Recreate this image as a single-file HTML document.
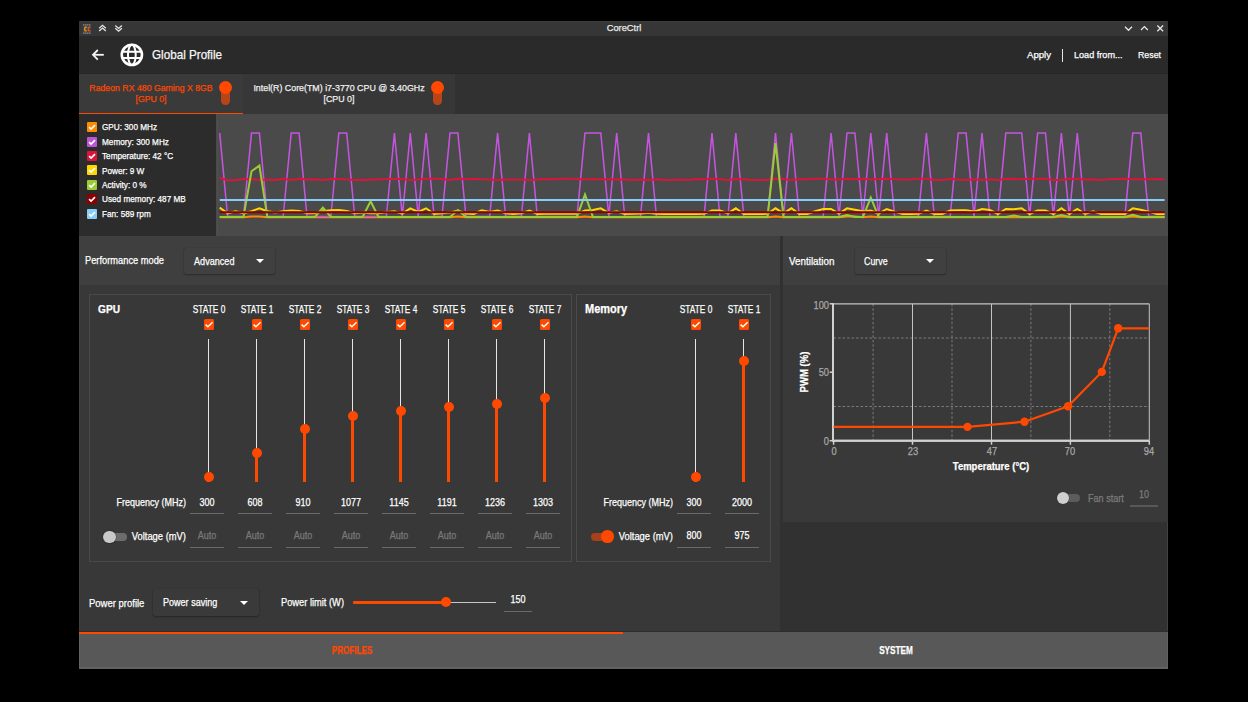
<!DOCTYPE html>
<html><head><meta charset="utf-8">
<style>
*{box-sizing:border-box;margin:0;padding:0}
html,body{width:1248px;height:702px;overflow:hidden;background:#000}
body{position:relative;font-family:"Liberation Sans",sans-serif;color:#fff}
.a{position:absolute}
.t{position:absolute;line-height:0;white-space:nowrap;color:#fff;-webkit-text-stroke:0.25px currentColor}
.cb{position:absolute;width:10.5px;height:10.8px;border-radius:1.5px;background:#ff4800}
.cb svg,.lg svg{position:absolute;left:0;top:0}
.lg{position:absolute;width:10px;height:10px;border-radius:1px}
.trk{position:absolute;width:1.6px;background:#e6e6e6}
.otrk{position:absolute;width:2.6px;background:#ff4800}
.hdl{position:absolute;width:10px;height:10px;border-radius:50%;background:#ff4800}
.ul{position:absolute;height:1px;background:#6a6a6a}
.combo{position:absolute;background:#3a3a3a;border-radius:2.5px;box-shadow:0 0 1px rgba(0,0,0,.25),0 1px 2px rgba(0,0,0,.3)}
.tri{position:absolute;width:0;height:0;border-left:4px solid transparent;border-right:4px solid transparent;border-top:4.5px solid #fff}
</style></head><body>

<div class="a" style="left:79px;top:21px;width:1089px;height:647.7px;background:#313131"></div>
<div class="a" style="left:79px;top:21px;width:1089px;height:15px;background:#363636;border-radius:3px 3px 0 0"></div>
<div class="a" style="left:81px;top:21px;width:1085px;height:1px;background:#3e3e3e"></div>
<svg class="a" style="left:79px;top:21px" width="1089" height="15" viewBox="79 21 1089 15">
<rect x="82.8" y="24" width="8.4" height="10" fill="#3d434a"/>
<g fill="#9aa0a6"><rect x="83.3" y="24.2" width="1" height="1.3"/><rect x="85.3" y="24.2" width="1" height="1.3"/><rect x="87.3" y="24.2" width="1" height="1.3"/><rect x="89.3" y="24.2" width="1" height="1.3"/>
<rect x="83.3" y="32.5" width="1" height="1.3"/><rect x="85.3" y="32.5" width="1" height="1.3"/><rect x="87.3" y="32.5" width="1" height="1.3"/><rect x="89.3" y="32.5" width="1" height="1.3"/></g>
<path d="M86.9 27.3 H85.6 Q84.7 27.3 84.7 28.2 V30 Q84.7 30.9 85.6 30.9 H86.9" fill="none" stroke="#f0900a" stroke-width="1.4"/>
<path d="M90.5 27.3 H89.2 Q88.3 27.3 88.3 28.2 V30 Q88.3 30.9 89.2 30.9 H90.5" fill="none" stroke="#e8501a" stroke-width="1.4"/>
<g fill="none" stroke="#e6e6e6" stroke-width="1.3">
<path d="M99.2 28.2 L102.5 25.3 L105.8 28.2"/><path d="M99.2 31 L102.5 28.1 L105.8 31"/>
<path d="M115.3 25.5 L118.6 28.4 L121.9 25.5"/><path d="M115.3 28.3 L118.6 31.2 L121.9 28.3"/>
<path d="M1125 26.8 L1128.5 30.3 L1132 26.8"/>
<path d="M1141 30 L1144.4 26.6 L1147.8 30"/>
<path d="M1157.3 25.5 L1163.1 31.3 M1163.1 25.5 L1157.3 31.3"/>
</g>
</svg>
<div class="t" style="left:623.6px;top:28.3px;font-size:9.58px;transform:translateX(-50%) scaleX(0.971);color:#e8e8e8">CoreCtrl</div>
<div class="a" style="left:79px;top:36px;width:1089px;height:37px;background:#2a2a2a"></div>
<svg class="a" style="left:79px;top:36px" width="200" height="37" viewBox="79 36 200 37">
<g fill="none" stroke="#f4f4f4" stroke-width="1.8">
<path d="M93 54.8 H103.8"/><path d="M97.8 50 L93 54.8 L97.8 59.6"/>
</g>
<g fill="none" stroke="#fff">
<circle cx="131.85" cy="54.85" r="10.1" stroke-width="2.6"/>
<ellipse cx="131.85" cy="54.85" rx="3.9" ry="10" stroke-width="2"/>
<path d="M121.5 51.7 H142.2 M121.5 57.9 H142.2" stroke-width="2"/>
</g>
</svg>
<div class="t" style="left:152.0px;top:55.4px;font-size:12.02px;transform-origin:0 0;transform:scaleX(0.971);color:#f6f6f6">Global Profile</div>
<div class="t" style="left:1026.7px;top:55.3px;font-size:9.79px;transform-origin:0 0;transform:scaleX(0.980)">Apply</div>
<div class="a" style="left:1062px;top:49px;width:1.4px;height:12.7px;background:#dfe8ee"></div>
<div class="t" style="left:1073.5px;top:55.3px;font-size:9.80px;transform-origin:0 0;transform:scaleX(0.929)">Load from...</div>
<div class="t" style="left:1137.6px;top:55.3px;font-size:9.80px;transform-origin:0 0;transform:scaleX(0.898)">Reset</div>
<div class="a" style="left:79px;top:73px;width:1089px;height:41px;background:#313131"></div>
<div class="a" style="left:79px;top:73px;width:1089px;height:1px;background:#272727"></div>
<div class="a" style="left:79px;top:74px;width:164px;height:40px;background:#3a3a3a"></div>
<div class="a" style="left:243px;top:74px;width:211.5px;height:40px;background:#373737"></div>
<div class="a" style="left:79px;top:112.5px;width:164px;height:1.8px;background:#ff4800"></div>
<div class="t" style="left:150.6px;top:88.0px;font-size:9.79px;transform:translateX(-50%) scaleX(0.893);color:#ff4800">Radeon RX 480 Gaming X 8GB</div>
<div class="t" style="left:150.6px;top:99.0px;font-size:9.79px;transform:translateX(-50%) scaleX(0.893);color:#ff4800">[GPU 0]</div>
<div class="a" style="left:221.4px;top:87px;width:8.5px;height:18px;background:#b8441a;border-radius:4.25px"></div>
<div class="a" style="left:219.1px;top:81.4px;width:13px;height:13px;background:#ff4800;border-radius:50%"></div>
<div class="t" style="left:338.6px;top:88.0px;font-size:9.92px;transform:translateX(-50%) scaleX(0.893);color:#f0f0f0">Intel(R) Core(TM) i7-3770 CPU @ 3.40GHz</div>
<div class="t" style="left:338.6px;top:99.0px;font-size:9.92px;transform:translateX(-50%) scaleX(0.893);color:#f0f0f0">[CPU 0]</div>
<div class="a" style="left:433px;top:87px;width:8.5px;height:18px;background:#b8441a;border-radius:4.25px"></div>
<div class="a" style="left:430.7px;top:81.4px;width:13px;height:13px;background:#ff4800;border-radius:50%"></div>
<div class="a" style="left:79px;top:114.3px;width:137px;height:121.7px;background:#2c2c2c"></div>
<div class="a" style="left:216px;top:114.3px;width:952px;height:121.7px;background:#4a4a4a"></div>
<div class="a" style="left:216.5px;top:114.3px;width:1.6px;height:121.7px;background:#4f4f4f"></div>
<div class="lg" style="left:87px;top:122.2px;background:#ff8c00"><svg width="10" height="10" viewBox="0 0 10 10"><path d="M2.1 5.1 L4.1 7.1 L8 3.1" fill="none" stroke="#fff" stroke-width="1.6"/></svg></div>
<div class="t" style="left:101.7px;top:127.4px;font-size:9.18px;transform-origin:0 0;transform:scaleX(0.893)">GPU: 300 MHz</div>
<div class="lg" style="left:87px;top:136.6px;background:#ba55d3"><svg width="10" height="10" viewBox="0 0 10 10"><path d="M2.1 5.1 L4.1 7.1 L8 3.1" fill="none" stroke="#fff" stroke-width="1.6"/></svg></div>
<div class="t" style="left:101.7px;top:141.8px;font-size:9.18px;transform-origin:0 0;transform:scaleX(0.893)">Memory: 300 MHz</div>
<div class="lg" style="left:87px;top:151.0px;background:#dc143c"><svg width="10" height="10" viewBox="0 0 10 10"><path d="M2.1 5.1 L4.1 7.1 L8 3.1" fill="none" stroke="#fff" stroke-width="1.6"/></svg></div>
<div class="t" style="left:101.7px;top:156.2px;font-size:9.18px;transform-origin:0 0;transform:scaleX(0.893)">Temperature: 42 °C</div>
<div class="lg" style="left:87px;top:165.4px;background:#ffd700"><svg width="10" height="10" viewBox="0 0 10 10"><path d="M2.1 5.1 L4.1 7.1 L8 3.1" fill="none" stroke="#fff" stroke-width="1.6"/></svg></div>
<div class="t" style="left:101.7px;top:170.6px;font-size:9.18px;transform-origin:0 0;transform:scaleX(0.893)">Power: 9 W</div>
<div class="lg" style="left:87px;top:179.8px;background:#9acd32"><svg width="10" height="10" viewBox="0 0 10 10"><path d="M2.1 5.1 L4.1 7.1 L8 3.1" fill="none" stroke="#fff" stroke-width="1.6"/></svg></div>
<div class="t" style="left:101.7px;top:185.0px;font-size:9.18px;transform-origin:0 0;transform:scaleX(0.893)">Activity: 0 %</div>
<div class="lg" style="left:87px;top:194.2px;background:#8b0000"><svg width="10" height="10" viewBox="0 0 10 10"><path d="M2.1 5.1 L4.1 7.1 L8 3.1" fill="none" stroke="#fff" stroke-width="1.6"/></svg></div>
<div class="t" style="left:101.7px;top:199.4px;font-size:9.18px;transform-origin:0 0;transform:scaleX(0.893)">Used memory: 487 MB</div>
<div class="lg" style="left:87px;top:208.6px;background:#87cefa"><svg width="10" height="10" viewBox="0 0 10 10"><path d="M2.1 5.1 L4.1 7.1 L8 3.1" fill="none" stroke="#fff" stroke-width="1.6"/></svg></div>
<div class="t" style="left:101.7px;top:213.8px;font-size:9.18px;transform-origin:0 0;transform:scaleX(0.893)">Fan: 589 rpm</div>
<svg class="a" style="left:0;top:0" width="1248" height="702" viewBox="0 0 1248 702">
<polyline points="219.7,217.2 227.6,217.2 235.6,217.2 243.5,217.2 251.5,216.6 259.4,216.6 267.3,217.2 275.3,217.2 283.2,217.2 291.2,217.2 299.1,217.2 307.0,217.2 315.0,217.2 322.9,217.2 330.9,217.2 338.8,217.2 346.7,217.2 354.7,217.2 362.6,217.2 370.6,217.2 378.5,217.2 386.4,217.2 394.4,217.2 402.3,217.2 410.3,217.2 418.2,217.2 426.1,217.2 434.1,217.2 442.0,217.2 450.0,217.2 457.9,216.6 465.9,217.2 473.8,217.2 481.7,217.2 489.7,217.2 497.6,217.2 505.6,217.2 513.5,217.2 521.4,217.2 529.4,217.2 537.3,217.2 545.3,217.2 553.2,217.2 561.1,217.2 569.1,217.2 577.0,217.2 585.0,216.6 592.9,217.2 600.8,217.2 608.8,217.2 616.7,217.2 624.7,217.2 632.6,217.2 640.5,217.2 648.5,217.2 656.4,217.2 664.4,217.2 672.3,217.2 680.2,217.2 688.2,217.2 696.1,217.2 704.1,217.2 712.0,217.2 719.9,217.2 727.9,217.2 735.8,217.2 743.8,217.2 751.7,217.2 759.6,217.2 767.6,217.2 775.5,216.6 783.5,217.2 791.4,217.2 799.3,217.2 807.3,217.2 815.2,217.2 823.2,217.2 831.1,217.2 839.0,217.2 847.0,216.6 854.9,216.6 862.9,217.2 870.8,216.6 878.7,217.2 886.7,217.2 894.6,217.2 902.6,217.2 910.5,217.2 918.4,217.2 926.4,217.2 934.3,217.2 942.3,217.2 950.2,217.2 958.2,217.2 966.1,217.2 974.0,217.2 982.0,217.2 989.9,217.2 997.9,217.2 1005.8,217.2 1013.7,217.2 1021.7,217.2 1029.6,217.2 1037.6,217.2 1045.5,217.2 1053.4,217.2 1061.4,216.6 1069.3,217.2 1077.3,217.2 1085.2,217.2 1093.1,217.2 1101.1,217.2 1109.0,217.2 1117.0,217.2 1124.9,217.2 1132.8,216.6 1140.8,217.2 1148.7,217.2 1156.7,217.2 1164.6,217.2" fill="none" stroke="#ff8c00" stroke-width="2" stroke-linejoin="miter"/>
<polyline points="219.7,133.1 227.6,216.4 235.6,216.4 243.5,216.4 251.5,133.1 259.4,133.1 267.3,216.4 275.3,216.4 283.2,216.4 291.2,133.1 299.1,133.1 307.0,216.4 315.0,216.4 322.9,216.4 330.9,216.4 338.8,133.1 346.7,133.1 354.7,216.4 362.6,216.4 370.6,216.4 378.5,216.4 386.4,216.4 394.4,133.1 402.3,216.4 410.3,133.1 418.2,216.4 426.1,133.1 434.1,216.4 442.0,216.4 450.0,133.1 457.9,133.1 465.9,216.4 473.8,216.4 481.7,216.4 489.7,216.4 497.6,133.1 505.6,216.4 513.5,216.4 521.4,216.4 529.4,133.1 537.3,216.4 545.3,216.4 553.2,216.4 561.1,216.4 569.1,216.4 577.0,216.4 585.0,133.1 592.9,133.1 600.8,133.1 608.8,216.4 616.7,133.1 624.7,216.4 632.6,216.4 640.5,216.4 648.5,133.1 656.4,216.4 664.4,216.4 672.3,216.4 680.2,216.4 688.2,216.4 696.1,216.4 704.1,216.4 712.0,133.1 719.9,216.4 727.9,216.4 735.8,133.1 743.8,216.4 751.7,216.4 759.6,216.4 767.6,216.4 775.5,133.1 783.5,216.4 791.4,133.1 799.3,216.4 807.3,216.4 815.2,216.4 823.2,216.4 831.1,133.1 839.0,216.4 847.0,133.1 854.9,133.1 862.9,216.4 870.8,133.1 878.7,216.4 886.7,133.1 894.6,216.4 902.6,216.4 910.5,216.4 918.4,216.4 926.4,133.1 934.3,216.4 942.3,216.4 950.2,216.4 958.2,133.1 966.1,133.1 974.0,216.4 982.0,133.1 989.9,216.4 997.9,216.4 1005.8,133.1 1013.7,133.1 1021.7,133.1 1029.6,216.4 1037.6,133.1 1045.5,133.1 1053.4,216.4 1061.4,133.1 1069.3,216.4 1077.3,133.1 1085.2,216.4 1093.1,216.4 1101.1,216.4 1109.0,216.4 1117.0,216.4 1124.9,216.4 1132.8,133.1 1140.8,133.1 1148.7,216.4 1156.7,216.4 1164.6,216.4" fill="none" stroke="#c555e0" stroke-width="1.5" stroke-linejoin="miter"/>
<polyline points="219.7,177.8 227.6,180.5 235.6,179.9 243.5,179.0 251.5,179.3 259.4,179.9 267.3,179.6 275.3,179.9 283.2,178.7 291.2,179.9 299.1,178.7 307.0,179.6 315.0,179.3 322.9,179.9 330.9,179.0 338.8,179.0 346.7,179.6 354.7,179.9 362.6,179.9 370.6,179.6 378.5,179.6 386.4,179.0 394.4,179.0 402.3,179.0 410.3,179.9 418.2,179.6 426.1,178.7 434.1,178.7 442.0,179.0 450.0,179.9 457.9,178.7 465.9,179.3 473.8,178.7 481.7,179.3 489.7,179.6 497.6,179.9 505.6,179.6 513.5,179.6 521.4,179.6 529.4,179.9 537.3,179.6 545.3,179.0 553.2,179.3 561.1,178.7 569.1,178.7 577.0,179.0 585.0,179.6 592.9,179.0 600.8,179.3 608.8,179.6 616.7,179.3 624.7,179.6 632.6,179.9 640.5,179.6 648.5,179.9 656.4,179.3 664.4,179.9 672.3,179.9 680.2,179.6 688.2,179.9 696.1,179.0 704.1,179.3 712.0,178.7 719.9,179.3 727.9,179.9 735.8,179.0 743.8,179.3 751.7,179.9 759.6,179.9 767.6,179.9 775.5,178.7 783.5,179.0 791.4,179.9 799.3,179.3 807.3,179.3 815.2,178.7 823.2,178.7 831.1,179.6 839.0,179.6 847.0,178.7 854.9,179.3 862.9,178.7 870.8,179.6 878.7,179.0 886.7,178.7 894.6,179.3 902.6,179.6 910.5,179.6 918.4,178.7 926.4,178.7 934.3,179.9 942.3,179.9 950.2,178.7 958.2,179.6 966.1,179.9 974.0,179.3 982.0,179.9 989.9,179.3 997.9,179.9 1005.8,179.0 1013.7,178.7 1021.7,179.3 1029.6,178.7 1037.6,178.7 1045.5,178.7 1053.4,179.9 1061.4,179.9 1069.3,178.7 1077.3,179.0 1085.2,179.6 1093.1,179.3 1101.1,179.9 1109.0,179.3 1117.0,179.0 1124.9,178.7 1132.8,179.3 1140.8,179.3 1148.7,179.3 1156.7,179.0 1164.6,179.6" fill="none" stroke="#dc143c" stroke-width="2" stroke-linejoin="miter"/>
<polyline points="219.7,207.6 227.6,213.3 235.6,211.2 243.5,213.3 251.5,211.2 259.4,208.3 267.3,211.2 275.3,212.6 283.2,211.2 291.2,210.5 299.1,210.9 307.0,213.3 315.0,213.3 322.9,211.2 330.9,210.2 338.8,210.0 346.7,210.9 354.7,213.3 362.6,212.6 370.6,213.3 378.5,213.3 386.4,212.3 394.4,211.2 402.3,213.6 410.3,208.3 418.2,211.9 426.1,208.3 434.1,214.0 442.0,213.3 450.0,212.6 457.9,210.5 465.9,213.6 473.8,214.0 481.7,210.2 489.7,211.9 497.6,210.5 505.6,213.3 513.5,214.0 521.4,213.3 529.4,210.5 537.3,214.0 545.3,213.8 553.2,213.8 561.1,213.8 569.1,213.8 577.0,213.8 585.0,210.5 592.9,210.0 600.8,208.3 608.8,213.0 616.7,211.2 624.7,214.0 632.6,213.8 640.5,213.5 648.5,212.8 656.4,213.8 664.4,214.0 672.3,214.0 680.2,214.0 688.2,214.0 696.1,214.0 704.1,213.8 712.0,210.5 719.9,210.5 727.9,213.3 735.8,208.3 743.8,214.0 751.7,214.0 759.6,214.0 767.6,213.8 775.5,208.3 783.5,213.3 791.4,208.3 799.3,214.0 807.3,214.0 815.2,211.2 823.2,209.0 831.1,209.0 839.0,213.6 847.0,208.3 854.9,209.8 862.9,211.2 870.8,210.5 878.7,213.6 886.7,209.0 894.6,211.6 902.6,214.0 910.5,214.0 918.4,213.8 926.4,210.5 934.3,214.0 942.3,214.0 950.2,210.5 958.2,210.2 966.1,210.2 974.0,211.6 982.0,209.0 989.9,210.0 997.9,214.0 1005.8,209.0 1013.7,209.3 1021.7,208.3 1029.6,214.0 1037.6,210.5 1045.5,210.5 1053.4,214.0 1061.4,208.3 1069.3,214.0 1077.3,209.0 1085.2,214.0 1093.1,211.2 1101.1,214.0 1109.0,214.0 1117.0,214.0 1124.9,214.0 1132.8,208.3 1140.8,209.8 1148.7,211.6 1156.7,214.0 1164.6,214.0" fill="none" stroke="#ffd700" stroke-width="2" stroke-linejoin="miter"/>
<polyline points="219.7,216.9 227.6,216.9 235.6,216.9 243.5,216.9 251.5,171.3 259.4,165.6 267.3,216.9 275.3,216.9 283.2,216.9 291.2,216.9 299.1,216.9 307.0,216.9 315.0,216.9 322.9,207.6 330.9,216.9 338.8,216.9 346.7,216.9 354.7,216.9 362.6,216.9 370.6,201.2 378.5,216.9 386.4,216.9 394.4,216.9 402.3,216.9 410.3,216.9 418.2,216.9 426.1,216.9 434.1,216.9 442.0,216.9 450.0,216.9 457.9,210.0 465.9,216.9 473.8,216.9 481.7,216.9 489.7,216.9 497.6,216.9 505.6,216.9 513.5,216.9 521.4,216.9 529.4,216.9 537.3,216.9 545.3,216.9 553.2,216.9 561.1,216.9 569.1,216.9 577.0,216.9 585.0,194.4 592.9,216.9 600.8,216.9 608.8,216.9 616.7,216.9 624.7,216.9 632.6,216.9 640.5,216.9 648.5,216.9 656.4,216.9 664.4,216.9 672.3,216.9 680.2,216.9 688.2,216.9 696.1,216.9 704.1,216.9 712.0,216.9 719.9,216.9 727.9,216.9 735.8,216.9 743.8,216.9 751.7,216.9 759.6,216.9 767.6,216.9 775.5,143.2 783.5,216.9 791.4,216.9 799.3,216.9 807.3,216.9 815.2,216.9 823.2,216.9 831.1,216.9 839.0,216.9 847.0,215.0 854.9,216.9 862.9,216.9 870.8,197.6 878.7,216.9 886.7,216.9 894.6,216.9 902.6,216.9 910.5,216.9 918.4,216.9 926.4,216.9 934.3,216.9 942.3,216.9 950.2,216.9 958.2,216.9 966.1,216.9 974.0,216.9 982.0,216.9 989.9,216.9 997.9,216.9 1005.8,216.9 1013.7,215.5 1021.7,216.9 1029.6,216.9 1037.6,216.9 1045.5,216.9 1053.4,216.9 1061.4,215.0 1069.3,216.9 1077.3,216.9 1085.2,216.9 1093.1,216.9 1101.1,216.9 1109.0,216.9 1117.0,216.9 1124.9,216.9 1132.8,214.7 1140.8,216.9 1148.7,216.9 1156.7,216.9 1164.6,216.9" fill="none" stroke="#9acd32" stroke-width="2" stroke-linejoin="miter"/>
<line x1="219.7" y1="212.2" x2="1164.6" y2="212.2" stroke="#8b0000" stroke-width="2"/>
<line x1="219.7" y1="200.1" x2="1164.6" y2="200.1" stroke="#87cefa" stroke-width="2"/>
</svg>
<div class="a" style="left:79px;top:236px;width:701px;height:48.5px;background:#3f3f3f"></div>
<div class="a" style="left:783px;top:236px;width:385px;height:48.5px;background:#3f3f3f"></div>
<div class="a" style="left:79px;top:284.5px;width:701px;height:346px;background:#383838"></div>
<div class="a" style="left:79px;top:236px;width:1px;height:394.5px;background:#404040"></div>
<div class="a" style="left:1167px;top:236px;width:1px;height:396px;background:#424242"></div>
<div class="a" style="left:783px;top:284.5px;width:385px;height:237px;background:#393939"></div>
<div class="t" style="left:85.4px;top:261.1px;font-size:10.42px;transform-origin:0 0;transform:scaleX(0.893)">Performance mode</div>
<div class="combo" style="left:184.3px;top:247.5px;width:90.7px;height:26.4px;background:#404040"></div>
<div class="t" style="left:193.5px;top:261.0px;font-size:11.10px;transform-origin:0 0;transform:scaleX(0.820)">Advanced</div>
<div class="tri" style="left:255.7px;top:259px"></div>
<div class="a" style="left:89px;top:294px;width:483px;height:267.5px;border:1px solid #4a4a4a"></div>
<div class="a" style="left:575.5px;top:294px;width:195.5px;height:267.5px;border:1px solid #4a4a4a"></div>
<div class="t" style="left:98.0px;top:309.2px;font-size:11.37px;transform-origin:0 0;transform:scaleX(0.893);font-weight:bold">GPU</div>
<div class="t" style="left:585.0px;top:309.2px;font-size:12.32px;transform-origin:0 0;transform:scaleX(0.893);font-weight:bold">Memory</div>
<div class="t" style="left:208.5px;top:308.7px;font-size:10.84px;transform:translateX(-50%) scaleX(0.769)">STATE 0</div>
<div class="cb" style="left:203.6px;top:318.9px"><svg width="11" height="11" viewBox="0 0 11 11"><path d="M1.6 5.6 L3.9 7.7 L8.6 3.2" fill="none" stroke="#fff" stroke-width="1.5"/></svg></div>
<div class="trk" style="left:207.7px;top:338.7px;height:138.3px"></div>
<div class="otrk" style="left:207.2px;top:477.0px;height:5.0px"></div>
<div class="hdl" style="left:203.5px;top:472.0px"></div>
<div class="t" style="left:207.2px;top:502.2px;font-size:10.53px;transform:translateX(-50%) scaleX(0.855)">300</div>
<div class="ul" style="left:190.3px;top:513px;width:33.6px"></div>
<div class="t" style="left:207.2px;top:536.2px;font-size:10.17px;transform:translateX(-50%) scaleX(0.885);color:#7a7a7a">Auto</div>
<div class="ul" style="left:190.3px;top:547px;width:33.6px"></div>
<div class="t" style="left:256.5px;top:308.7px;font-size:10.84px;transform:translateX(-50%) scaleX(0.769)">STATE 1</div>
<div class="cb" style="left:251.6px;top:318.9px"><svg width="11" height="11" viewBox="0 0 11 11"><path d="M1.6 5.6 L3.9 7.7 L8.6 3.2" fill="none" stroke="#fff" stroke-width="1.5"/></svg></div>
<div class="trk" style="left:255.7px;top:338.7px;height:114.3px"></div>
<div class="otrk" style="left:255.2px;top:453.0px;height:29.0px"></div>
<div class="hdl" style="left:251.5px;top:448.0px"></div>
<div class="t" style="left:255.2px;top:502.2px;font-size:10.53px;transform:translateX(-50%) scaleX(0.855)">608</div>
<div class="ul" style="left:238.3px;top:513px;width:33.6px"></div>
<div class="t" style="left:255.2px;top:536.2px;font-size:10.17px;transform:translateX(-50%) scaleX(0.885);color:#7a7a7a">Auto</div>
<div class="ul" style="left:238.3px;top:547px;width:33.6px"></div>
<div class="t" style="left:304.5px;top:308.7px;font-size:10.84px;transform:translateX(-50%) scaleX(0.769)">STATE 2</div>
<div class="cb" style="left:299.6px;top:318.9px"><svg width="11" height="11" viewBox="0 0 11 11"><path d="M1.6 5.6 L3.9 7.7 L8.6 3.2" fill="none" stroke="#fff" stroke-width="1.5"/></svg></div>
<div class="trk" style="left:303.7px;top:338.7px;height:90.5px"></div>
<div class="otrk" style="left:303.2px;top:429.2px;height:52.8px"></div>
<div class="hdl" style="left:299.5px;top:424.2px"></div>
<div class="t" style="left:303.2px;top:502.2px;font-size:10.53px;transform:translateX(-50%) scaleX(0.855)">910</div>
<div class="ul" style="left:286.3px;top:513px;width:33.6px"></div>
<div class="t" style="left:303.2px;top:536.2px;font-size:10.17px;transform:translateX(-50%) scaleX(0.885);color:#7a7a7a">Auto</div>
<div class="ul" style="left:286.3px;top:547px;width:33.6px"></div>
<div class="t" style="left:352.5px;top:308.7px;font-size:10.84px;transform:translateX(-50%) scaleX(0.769)">STATE 3</div>
<div class="cb" style="left:347.6px;top:318.9px"><svg width="11" height="11" viewBox="0 0 11 11"><path d="M1.6 5.6 L3.9 7.7 L8.6 3.2" fill="none" stroke="#fff" stroke-width="1.5"/></svg></div>
<div class="trk" style="left:351.7px;top:338.7px;height:77.3px"></div>
<div class="otrk" style="left:351.2px;top:416.0px;height:66.0px"></div>
<div class="hdl" style="left:347.5px;top:411.0px"></div>
<div class="t" style="left:351.2px;top:502.2px;font-size:10.53px;transform:translateX(-50%) scaleX(0.855)">1077</div>
<div class="ul" style="left:334.3px;top:513px;width:33.6px"></div>
<div class="t" style="left:351.2px;top:536.2px;font-size:10.17px;transform:translateX(-50%) scaleX(0.885);color:#7a7a7a">Auto</div>
<div class="ul" style="left:334.3px;top:547px;width:33.6px"></div>
<div class="t" style="left:400.5px;top:308.7px;font-size:10.84px;transform:translateX(-50%) scaleX(0.769)">STATE 4</div>
<div class="cb" style="left:395.6px;top:318.9px"><svg width="11" height="11" viewBox="0 0 11 11"><path d="M1.6 5.6 L3.9 7.7 L8.6 3.2" fill="none" stroke="#fff" stroke-width="1.5"/></svg></div>
<div class="trk" style="left:399.7px;top:338.7px;height:71.9px"></div>
<div class="otrk" style="left:399.2px;top:410.6px;height:71.4px"></div>
<div class="hdl" style="left:395.5px;top:405.6px"></div>
<div class="t" style="left:399.2px;top:502.2px;font-size:10.53px;transform:translateX(-50%) scaleX(0.855)">1145</div>
<div class="ul" style="left:382.3px;top:513px;width:33.6px"></div>
<div class="t" style="left:399.2px;top:536.2px;font-size:10.17px;transform:translateX(-50%) scaleX(0.885);color:#7a7a7a">Auto</div>
<div class="ul" style="left:382.3px;top:547px;width:33.6px"></div>
<div class="t" style="left:448.5px;top:308.7px;font-size:10.84px;transform:translateX(-50%) scaleX(0.769)">STATE 5</div>
<div class="cb" style="left:443.6px;top:318.9px"><svg width="11" height="11" viewBox="0 0 11 11"><path d="M1.6 5.6 L3.9 7.7 L8.6 3.2" fill="none" stroke="#fff" stroke-width="1.5"/></svg></div>
<div class="trk" style="left:447.7px;top:338.7px;height:68.3px"></div>
<div class="otrk" style="left:447.2px;top:407.0px;height:75.0px"></div>
<div class="hdl" style="left:443.5px;top:402.0px"></div>
<div class="t" style="left:447.2px;top:502.2px;font-size:10.53px;transform:translateX(-50%) scaleX(0.855)">1191</div>
<div class="ul" style="left:430.3px;top:513px;width:33.6px"></div>
<div class="t" style="left:447.2px;top:536.2px;font-size:10.17px;transform:translateX(-50%) scaleX(0.885);color:#7a7a7a">Auto</div>
<div class="ul" style="left:430.3px;top:547px;width:33.6px"></div>
<div class="t" style="left:496.5px;top:308.7px;font-size:10.84px;transform:translateX(-50%) scaleX(0.769)">STATE 6</div>
<div class="cb" style="left:491.6px;top:318.9px"><svg width="11" height="11" viewBox="0 0 11 11"><path d="M1.6 5.6 L3.9 7.7 L8.6 3.2" fill="none" stroke="#fff" stroke-width="1.5"/></svg></div>
<div class="trk" style="left:495.7px;top:338.7px;height:64.8px"></div>
<div class="otrk" style="left:495.2px;top:403.5px;height:78.5px"></div>
<div class="hdl" style="left:491.5px;top:398.5px"></div>
<div class="t" style="left:495.2px;top:502.2px;font-size:10.53px;transform:translateX(-50%) scaleX(0.855)">1236</div>
<div class="ul" style="left:478.3px;top:513px;width:33.6px"></div>
<div class="t" style="left:495.2px;top:536.2px;font-size:10.17px;transform:translateX(-50%) scaleX(0.885);color:#7a7a7a">Auto</div>
<div class="ul" style="left:478.3px;top:547px;width:33.6px"></div>
<div class="t" style="left:544.5px;top:308.7px;font-size:10.84px;transform:translateX(-50%) scaleX(0.769)">STATE 7</div>
<div class="cb" style="left:539.6px;top:318.9px"><svg width="11" height="11" viewBox="0 0 11 11"><path d="M1.6 5.6 L3.9 7.7 L8.6 3.2" fill="none" stroke="#fff" stroke-width="1.5"/></svg></div>
<div class="trk" style="left:543.7px;top:338.7px;height:59.7px"></div>
<div class="otrk" style="left:543.2px;top:398.4px;height:83.6px"></div>
<div class="hdl" style="left:539.5px;top:393.4px"></div>
<div class="t" style="left:543.2px;top:502.2px;font-size:10.53px;transform:translateX(-50%) scaleX(0.855)">1303</div>
<div class="ul" style="left:526.3px;top:513px;width:33.6px"></div>
<div class="t" style="left:543.2px;top:536.2px;font-size:10.17px;transform:translateX(-50%) scaleX(0.885);color:#7a7a7a">Auto</div>
<div class="ul" style="left:526.3px;top:547px;width:33.6px"></div>
<div class="t" style="left:695.5px;top:308.7px;font-size:10.84px;transform:translateX(-50%) scaleX(0.769)">STATE 0</div>
<div class="cb" style="left:690.6px;top:318.9px"><svg width="11" height="11" viewBox="0 0 11 11"><path d="M1.6 5.6 L3.9 7.7 L8.6 3.2" fill="none" stroke="#fff" stroke-width="1.5"/></svg></div>
<div class="trk" style="left:694.7px;top:338.7px;height:138.3px"></div>
<div class="otrk" style="left:694.2px;top:477.0px;height:5.0px"></div>
<div class="hdl" style="left:690.5px;top:472.0px"></div>
<div class="t" style="left:694.2px;top:502.2px;font-size:10.53px;transform:translateX(-50%) scaleX(0.855)">300</div>
<div class="ul" style="left:677.3px;top:513px;width:33.6px"></div>
<div class="t" style="left:694.2px;top:536.2px;font-size:10.17px;transform:translateX(-50%) scaleX(0.885);color:#fff">800</div>
<div class="ul" style="left:677.3px;top:547px;width:33.6px"></div>
<div class="t" style="left:743.5px;top:308.7px;font-size:10.84px;transform:translateX(-50%) scaleX(0.769)">STATE 1</div>
<div class="cb" style="left:738.6px;top:318.9px"><svg width="11" height="11" viewBox="0 0 11 11"><path d="M1.6 5.6 L3.9 7.7 L8.6 3.2" fill="none" stroke="#fff" stroke-width="1.5"/></svg></div>
<div class="trk" style="left:742.7px;top:338.7px;height:22.3px"></div>
<div class="otrk" style="left:742.2px;top:361.0px;height:121.0px"></div>
<div class="hdl" style="left:738.5px;top:356.0px"></div>
<div class="t" style="left:742.2px;top:502.2px;font-size:10.53px;transform:translateX(-50%) scaleX(0.855)">2000</div>
<div class="ul" style="left:725.3px;top:513px;width:33.6px"></div>
<div class="t" style="left:742.2px;top:536.2px;font-size:10.17px;transform:translateX(-50%) scaleX(0.885);color:#fff">975</div>
<div class="ul" style="left:725.3px;top:547px;width:33.6px"></div>
<div class="t" style="left:186.0px;top:503.2px;font-size:10.35px;transform-origin:100% 0;transform:translateX(-100%) scaleX(0.870)">Frequency (MHz)</div>
<div class="t" style="left:186.0px;top:536.4px;font-size:10.62px;transform-origin:100% 0;transform:translateX(-100%) scaleX(0.885)">Voltage (mV)</div>
<div class="t" style="left:673.2px;top:503.2px;font-size:10.35px;transform-origin:100% 0;transform:translateX(-100%) scaleX(0.870)">Frequency (MHz)</div>
<div class="t" style="left:673.2px;top:536.4px;font-size:10.62px;transform-origin:100% 0;transform:translateX(-100%) scaleX(0.885)">Voltage (mV)</div>
<div class="a" style="left:106px;top:532.8px;width:21px;height:8.4px;background:#6c6c6c;border-radius:4.2px"></div>
<div class="a" style="left:103.4px;top:530.5px;width:12.7px;height:12.7px;background:#c8c8c8;border-radius:50%;box-shadow:0 0 1.5px rgba(0,0,0,.6)"></div>
<div class="a" style="left:591px;top:532.6px;width:21px;height:8.4px;background:#a8401c;border-radius:4.2px"></div>
<div class="a" style="left:601.3px;top:530.2px;width:12.7px;height:12.7px;background:#ff4800;border-radius:50%"></div>
<div class="t" style="left:88.6px;top:602.6px;font-size:10.64px;transform-origin:0 0;transform:scaleX(0.893)">Power profile</div>
<div class="combo" style="left:153px;top:589px;width:105.7px;height:27px"></div>
<div class="t" style="left:162.5px;top:603.1px;font-size:10.14px;transform-origin:0 0;transform:scaleX(0.893)">Power saving</div>
<div class="tri" style="left:239.7px;top:600.5px"></div>
<div class="t" style="left:280.5px;top:603.2px;font-size:10.42px;transform-origin:0 0;transform:scaleX(0.893)">Power limit (W)</div>
<div class="a" style="left:352.5px;top:601.2px;width:94px;height:2.6px;background:#ff4800;border-radius:1px"></div>
<div class="a" style="left:446px;top:601.5px;width:50px;height:1.8px;background:#c8c8c8"></div>
<div class="hdl" style="left:441.2px;top:597px"></div>
<div class="t" style="left:518.2px;top:600.3px;font-size:10.35px;transform:translateX(-50%) scaleX(0.870)">150</div>
<div class="ul" style="left:504.3px;top:611px;width:27.8px"></div>
<div class="t" style="left:789.4px;top:260.8px;font-size:11.03px;transform-origin:0 0;transform:scaleX(0.893)">Ventilation</div>
<div class="combo" style="left:855.3px;top:247.5px;width:90.3px;height:26.4px;background:#404040"></div>
<div class="t" style="left:864.1px;top:261.0px;font-size:11.57px;transform-origin:0 0;transform:scaleX(0.769)">Curve</div>
<div class="tri" style="left:926.2px;top:259px"></div>
<svg class="a" style="left:783px;top:285px" width="385" height="236" viewBox="783 285 385 236">
<line x1="873.1" y1="303.8" x2="873.1" y2="440.7" stroke="#7c7c7c" stroke-width="1" stroke-dasharray="2.5 2"/>
<line x1="952.0" y1="303.8" x2="952.0" y2="440.7" stroke="#7c7c7c" stroke-width="1" stroke-dasharray="2.5 2"/>
<line x1="1030.9" y1="303.8" x2="1030.9" y2="440.7" stroke="#7c7c7c" stroke-width="1" stroke-dasharray="2.5 2"/>
<line x1="1109.8" y1="303.8" x2="1109.8" y2="440.7" stroke="#7c7c7c" stroke-width="1" stroke-dasharray="2.5 2"/>
<line x1="833.6" y1="338.0" x2="1149.3" y2="338.0" stroke="#7c7c7c" stroke-width="1" stroke-dasharray="2.5 2"/>
<line x1="833.6" y1="406.5" x2="1149.3" y2="406.5" stroke="#7c7c7c" stroke-width="1" stroke-dasharray="2.5 2"/>
<line x1="912.5" y1="303.8" x2="912.5" y2="440.7" stroke="#c4c4c4" stroke-width="1"/>
<line x1="991.5" y1="303.8" x2="991.5" y2="440.7" stroke="#c4c4c4" stroke-width="1"/>
<line x1="1070.4" y1="303.8" x2="1070.4" y2="440.7" stroke="#c4c4c4" stroke-width="1"/>
<line x1="1149.3" y1="303.8" x2="1149.3" y2="440.7" stroke="#c4c4c4" stroke-width="1"/>
<line x1="833.6" y1="303.8" x2="1149.3" y2="303.8" stroke="#c4c4c4" stroke-width="1.2"/>
<line x1="833.6" y1="440.7" x2="1149.3" y2="440.7" stroke="#c4c4c4" stroke-width="2"/>
<line x1="833.0" y1="303.3" x2="833.0" y2="441.7" stroke="#d0d0d0" stroke-width="2"/>
<line x1="832.6" y1="440.7" x2="1149.3" y2="440.7" stroke="#d0d0d0" stroke-width="2"/>
<line x1="829.6" y1="303.8" x2="833.6" y2="303.8" stroke="#d0d0d0" stroke-width="1.5"/>
<line x1="829.6" y1="372.2" x2="833.6" y2="372.2" stroke="#d0d0d0" stroke-width="1.5"/>
<line x1="829.6" y1="440.7" x2="833.6" y2="440.7" stroke="#d0d0d0" stroke-width="1.5"/>
<line x1="833.6" y1="440.7" x2="833.6" y2="444.7" stroke="#d0d0d0" stroke-width="1.5"/>
<line x1="912.5" y1="440.7" x2="912.5" y2="444.7" stroke="#d0d0d0" stroke-width="1.5"/>
<line x1="991.5" y1="440.7" x2="991.5" y2="444.7" stroke="#d0d0d0" stroke-width="1.5"/>
<line x1="1070.4" y1="440.7" x2="1070.4" y2="444.7" stroke="#d0d0d0" stroke-width="1.5"/>
<line x1="1149.3" y1="440.7" x2="1149.3" y2="444.7" stroke="#d0d0d0" stroke-width="1.5"/>
<polyline points="833.6,426.9 967.5,426.9 1024.5,421.7 1068.1,406.3 1101.8,371.9 1118.2,328.3 1149.3,328.3" fill="none" stroke="#ff4800" stroke-width="2.2"/>
<circle cx="967.5" cy="426.9" r="4.2" fill="#ff4800"/>
<circle cx="1024.5" cy="421.7" r="4.2" fill="#ff4800"/>
<circle cx="1068.1" cy="406.3" r="4.2" fill="#ff4800"/>
<circle cx="1101.8" cy="371.9" r="4.2" fill="#ff4800"/>
<circle cx="1118.2" cy="328.3" r="4.2" fill="#ff4800"/>
</svg>
<div class="t" style="left:829.0px;top:304.7px;font-size:10.51px;transform-origin:100% 0;transform:translateX(-100%) scaleX(0.885);color:#a8a8a8">100</div>
<div class="t" style="left:829.0px;top:372.2px;font-size:10.51px;transform-origin:100% 0;transform:translateX(-100%) scaleX(0.885);color:#a8a8a8">50</div>
<div class="t" style="left:829.0px;top:440.7px;font-size:10.51px;transform-origin:100% 0;transform:translateX(-100%) scaleX(0.885);color:#a8a8a8">0</div>
<div class="t" style="left:833.6px;top:451.2px;font-size:10.51px;transform:translateX(-50%) scaleX(0.885);color:#a8a8a8">0</div>
<div class="t" style="left:912.5px;top:451.2px;font-size:10.51px;transform:translateX(-50%) scaleX(0.885);color:#a8a8a8">23</div>
<div class="t" style="left:991.5px;top:451.2px;font-size:10.51px;transform:translateX(-50%) scaleX(0.885);color:#a8a8a8">47</div>
<div class="t" style="left:1070.4px;top:451.2px;font-size:10.51px;transform:translateX(-50%) scaleX(0.885);color:#a8a8a8">70</div>
<div class="t" style="left:1149.3px;top:451.2px;font-size:10.51px;transform:translateX(-50%) scaleX(0.885);color:#a8a8a8">94</div>
<div class="t" style="left:991.4px;top:466.4px;font-size:10.92px;transform:translateX(-50%) scaleX(0.870);font-weight:bold">Temperature (°C)</div>
<div class="t" style="left:803.6px;top:372px;font-size:11.2px;font-weight:bold;transform:translateX(-50%) rotate(-90deg) scaleX(0.855)">PWM (%)</div>
<div class="a" style="left:1060px;top:493.8px;width:20.2px;height:8.2px;background:#5c5c5c;border-radius:4.1px"></div>
<div class="a" style="left:1057.1px;top:491.8px;width:12.4px;height:12.4px;background:#d0d0d0;border-radius:50%;box-shadow:0 0 1px rgba(0,0,0,.5)"></div>
<div class="t" style="left:1087.8px;top:498.6px;font-size:10.19px;transform-origin:0 0;transform:scaleX(0.893);color:#7c7c7c">Fan start</div>
<div class="t" style="left:1144.3px;top:495.2px;font-size:10.17px;transform:translateX(-50%) scaleX(0.885);color:#7c7c7c">10</div>
<div class="a" style="left:1130.2px;top:505.2px;width:27.8px;height:1.6px;background:#585858"></div>
<div class="a" style="left:79px;top:630.5px;width:1089px;height:1.5px;background:#2e2e2e"></div>
<div class="a" style="left:79px;top:632px;width:1089px;height:36.7px;background:#585858"></div>
<div class="a" style="left:79px;top:667.2px;width:1089px;height:1.5px;background:#626262"></div>
<div class="a" style="left:79px;top:632px;width:1.3px;height:36.7px;background:#626262"></div>
<div class="a" style="left:1166.7px;top:632px;width:1.3px;height:36.7px;background:#626262"></div>
<div class="a" style="left:79px;top:631.8px;width:544px;height:2px;background:#ff4800"></div>
<div class="t" style="left:351.5px;top:650.4px;font-size:10.53px;transform:translateX(-50%) scaleX(0.769);font-weight:bold;color:#ff4800">PROFILES</div>
<div class="t" style="left:896.3px;top:650.4px;font-size:10.66px;transform:translateX(-50%) scaleX(0.769);font-weight:bold">SYSTEM</div>
</body></html>
